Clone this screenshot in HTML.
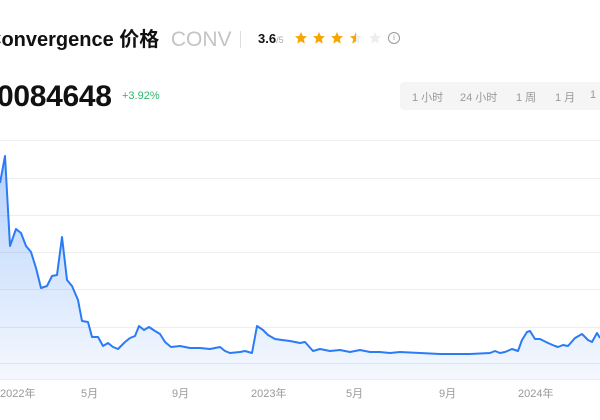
<!DOCTYPE html>
<html><head><meta charset="utf-8"><style>
body{margin:0;width:600px;height:420px;background:#fff;position:relative;overflow:hidden;font-family:"Liberation Sans","Noto Sans CJK SC",sans-serif;}
.a{position:absolute;white-space:nowrap}
.tab{position:absolute;top:82px;left:400px;width:220px;height:28px;background:#f5f5f5;border-radius:4px}
.tab span{position:absolute;top:7px;font-size:11px;color:#999}
.lbl{position:absolute;top:385px;font-size:11px;color:#999}
</style></head><body>
<div class="a" style="left:-13px;top:27px;height:26px;line-height:26px;font-size:20px;font-weight:bold;color:#111">Convergence 价格 <span style="font-weight:normal;color:#c4c4c4;margin-left:6px;font-size:21px">CONV</span></div>
<div class="a" style="left:240px;top:31px;width:1px;height:17px;background:#ddd"></div>
<div class="a" style="left:258px;top:31px;font-size:13px;font-weight:bold;color:#111">3.6<span style="font-size:9px;color:#aaa;font-weight:normal">/5</span></div>
<svg class="a" style="left:290px;top:30px" width="100" height="16">
<defs><clipPath id="h"><rect x="0" y="0" width="356" height="16"/></clipPath>
<path id="s" d="M0,-6 L1.8,-2 L6,-1.8 L2.8,1 L3.7,5.6 L0,3.2 L-3.7,5.6 L-2.8,1 L-6,-1.8 L-1.8,-2 Z"/></defs>
<use href="#s" x="11" y="8" fill="#f7a600"/>
<use href="#s" x="29" y="8" fill="#f7a600"/>
<use href="#s" x="47" y="8" fill="#f7a600"/>
<use href="#s" x="66" y="8" fill="#eee"/>
<svg x="60" y="0" width="6" height="16"><use href="#s" x="6" y="8" fill="#f7a600"/></svg>
<use href="#s" x="85" y="8" fill="#eee"/>
</svg>
<div class="a" style="left:388px;top:32px;width:10px;height:10px;border:1px solid #999;border-radius:50%;font-size:8px;color:#999;text-align:center;line-height:10px">i</div>
<div class="a" style="left:-3px;top:80px;font-size:30px;font-weight:bold;color:#111;letter-spacing:-0.3px">0084648</div>
<div class="a" style="left:122px;top:90px;font-size:11px;color:#2db56d">+3.92%</div>
<div class="tab"><span style="left:12px">1 小时</span><span style="left:60px">24 小时</span><span style="left:116px">1 周</span><span style="left:155px">1 月</span><span style="left:190px">1</span></div>
<svg class="a" style="left:0;top:0" width="600" height="420">
<defs><linearGradient id="g" x1="0" y1="0" x2="0" y2="1"><stop offset="0" stop-color="#2e7cf6" stop-opacity="0.35"/><stop offset="1" stop-color="#2e7cf6" stop-opacity="0.05"/></linearGradient></defs>
<g stroke="#eee" stroke-width="1">
<line x1="0" y1="140.5" x2="600" y2="140.5"/><line x1="0" y1="178.5" x2="600" y2="178.5"/><line x1="0" y1="215.5" x2="600" y2="215.5"/><line x1="0" y1="252.5" x2="600" y2="252.5"/><line x1="0" y1="289.5" x2="600" y2="289.5"/><line x1="0" y1="327.5" x2="600" y2="327.5"/><line x1="0" y1="363.5" x2="600" y2="363.5"/><line x1="0" y1="379.5" x2="600" y2="379.5"/>
</g>
<path d="M0,183 L5,156 L10,246 L16,229 L21,233 L26,246 L31,252 L36,268 L41,288 L47,286 L52,276 L57,275 L62,237 L67,280 L72,286 L78,300 L82,321 L88,322 L92,337 L98,337 L103,346 L108,343 L113,347 L118,349 L125,342 L130,338 L135,336 L139,326 L144,330 L149,327 L155,331 L160,334 L165,342 L171,347 L180,346 L190,348 L200,348 L210,349 L220,347 L225,351 L230,353 L240,352 L245,351 L252,353 L257,326 L263,330 L268,335 L275,339 L282,340 L290,341 L295,342 L300,343 L305,342 L313,351 L320,349 L330,351 L340,350 L350,352 L360,350 L370,352 L380,352 L390,353 L400,352 L420,353 L440,354 L470,354 L490,353 L495,351 L500,353 L505,352 L512,349 L518,351 L522,340 L527,332 L530,331 L535,339 L540,339 L548,343 L555,346 L558,347 L563,345 L568,346 L575,338 L582,334 L588,340 L592,342 L597,333 L600,338 L600,379 L0,379 Z" fill="url(#g)"/>
<path d="M0,183 L5,156 L10,246 L16,229 L21,233 L26,246 L31,252 L36,268 L41,288 L47,286 L52,276 L57,275 L62,237 L67,280 L72,286 L78,300 L82,321 L88,322 L92,337 L98,337 L103,346 L108,343 L113,347 L118,349 L125,342 L130,338 L135,336 L139,326 L144,330 L149,327 L155,331 L160,334 L165,342 L171,347 L180,346 L190,348 L200,348 L210,349 L220,347 L225,351 L230,353 L240,352 L245,351 L252,353 L257,326 L263,330 L268,335 L275,339 L282,340 L290,341 L295,342 L300,343 L305,342 L313,351 L320,349 L330,351 L340,350 L350,352 L360,350 L370,352 L380,352 L390,353 L400,352 L420,353 L440,354 L470,354 L490,353 L495,351 L500,353 L505,352 L512,349 L518,351 L522,340 L527,332 L530,331 L535,339 L540,339 L548,343 L555,346 L558,347 L563,345 L568,346 L575,338 L582,334 L588,340 L592,342 L597,333 L600,338" fill="none" stroke="#2b7bf5" stroke-width="2" stroke-linejoin="round"/>
</svg>
<div class="lbl" style="left:0">2022年</div>
<div class="lbl" style="left:81px">5月</div>
<div class="lbl" style="left:172px">9月</div>
<div class="lbl" style="left:251px">2023年</div>
<div class="lbl" style="left:346px">5月</div>
<div class="lbl" style="left:439px">9月</div>
<div class="lbl" style="left:518px">2024年</div>
</body></html>
